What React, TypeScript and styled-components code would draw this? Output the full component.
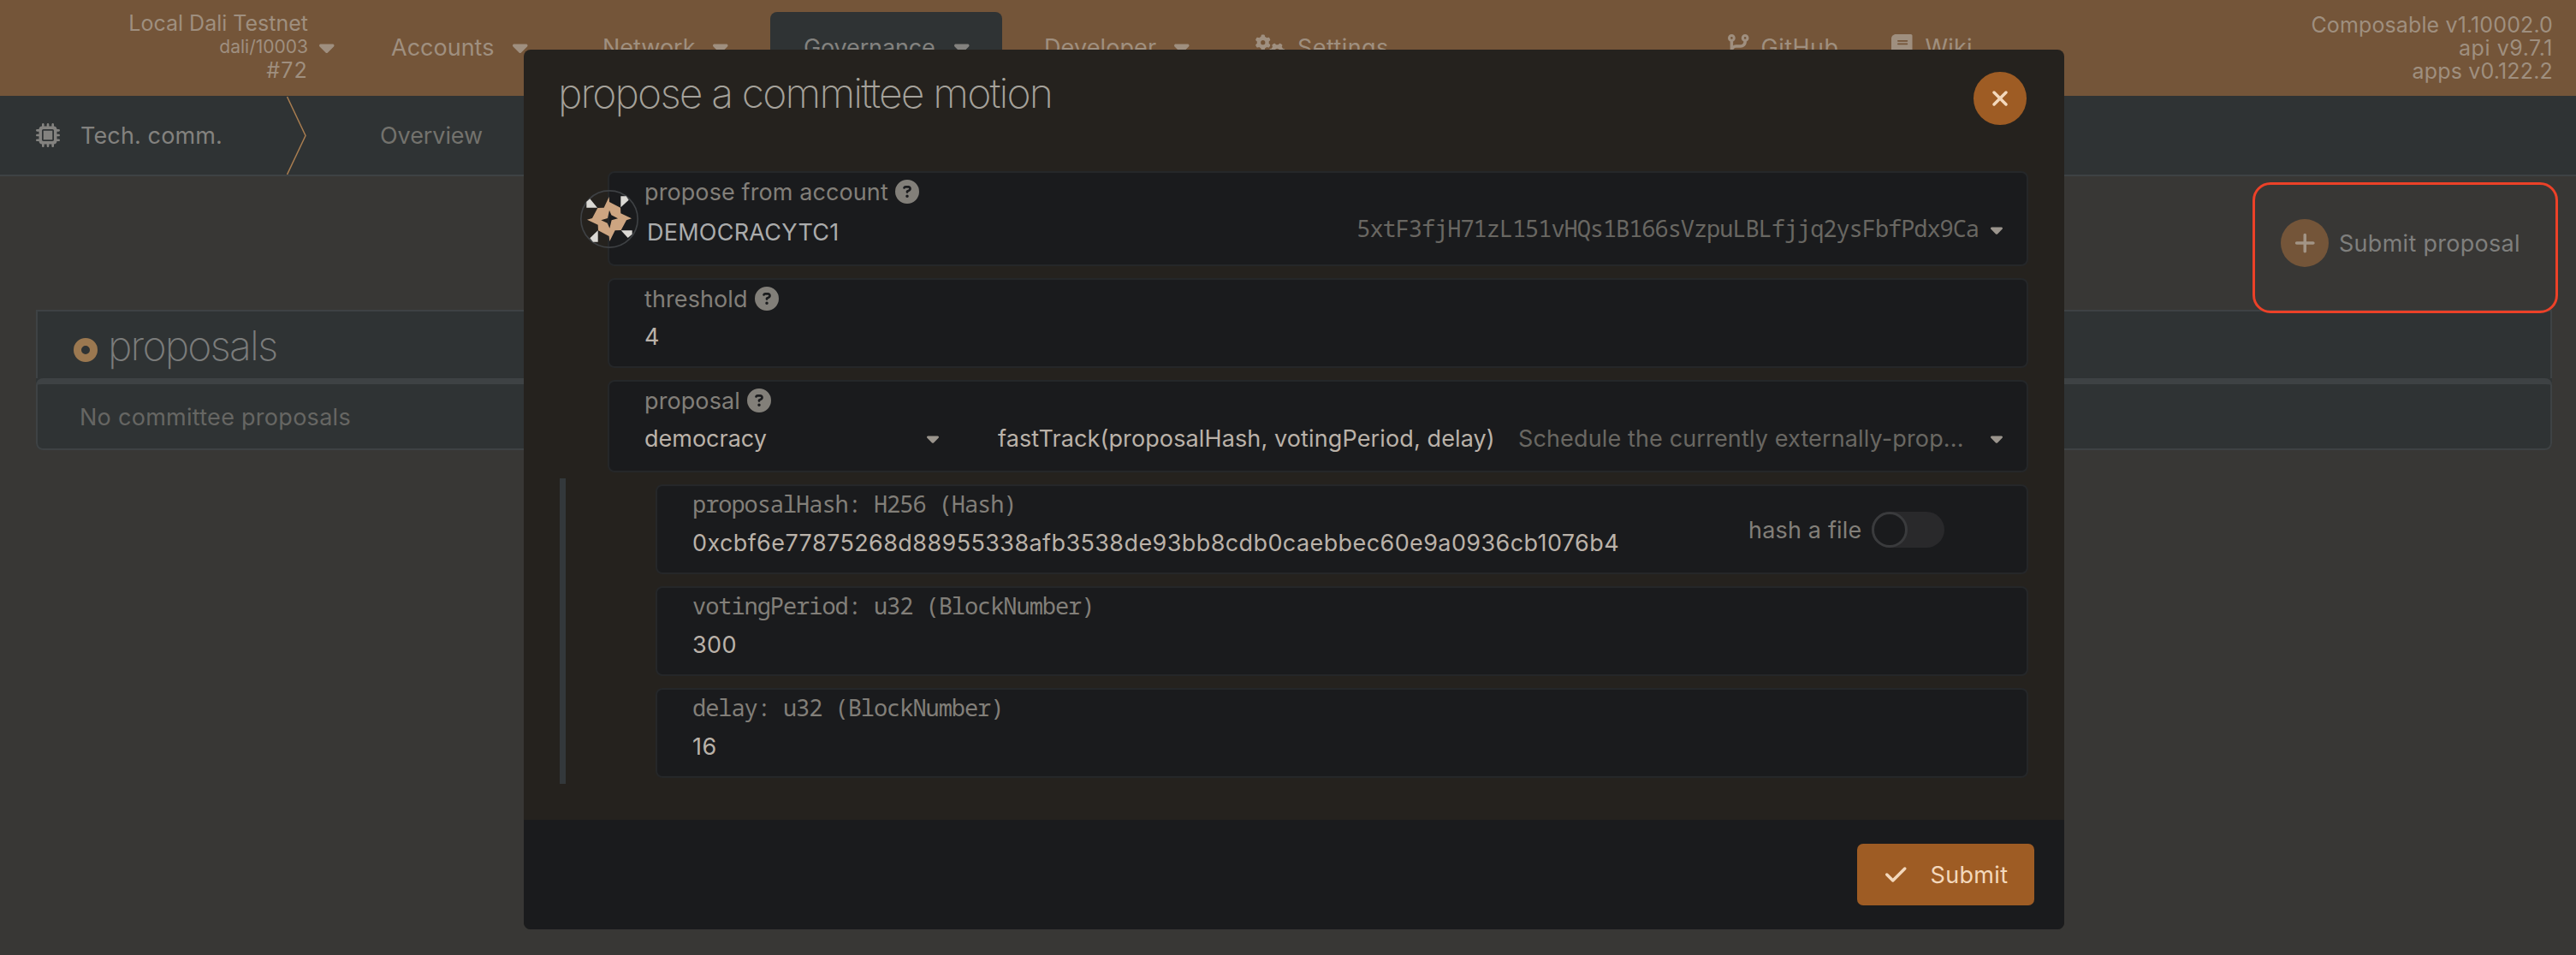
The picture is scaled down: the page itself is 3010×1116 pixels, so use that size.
import React from 'react';
import type { ReactNode } from 'react';
import styled, { createGlobalStyle } from 'styled-components';
import {
  FaBook,
  FaCaretDown,
  FaCheck,
  FaCircleQuestion,
  FaCodeBranch,
  FaGears,
  FaMicrochip,
  FaPlus,
  FaXmark,
} from 'react-icons/fa6';

const sans = `Inter, 'Liberation Sans', sans-serif`;
const mono = `'Noto Sans Mono', 'DejaVu Sans Mono', monospace`;

const color = {
  header: '#745539',
  headerText: '#9f8f7f',
  panel: '#2f3334',
  panelBorder: '#3e4244',
  page: '#383735',
  modal: '#25221e',
  field: '#1a1b1d',
  fieldBorder: '#252729',
  label: '#827f79',
  value: '#bab2a9',
  dim: '#696762',
  accent: '#9e5c24',
  accentText: '#f3d8bc',
};

const GlobalStyle = createGlobalStyle`
  *, *::before, *::after { box-sizing: border-box; }
  body {
    margin: 0;
    background: ${color.page};
    color: ${color.label};
    font-family: ${sans};
    font-size: 27px;
    line-height: 34px;
  }
`;

const Page = styled.div`
  position: relative;
  width: 3010px;
  height: 1116px;
  overflow: hidden;
  background: ${color.page};
`;

const Text = styled.span<{ $ls?: number; $w?: number; $color?: string }>`
  flex: none;
  padding-top: 2px;
  white-space: pre;
  letter-spacing: ${(p) => p.$ls ?? 0}px;
  width: ${(p) => (p.$w ? `${p.$w}px` : 'auto')};
  color: ${(p) => p.$color ?? 'inherit'};
`;

const Icon = styled.span<{ $w?: number; $h?: number }>`
  display: flex;
  flex: none;
  svg {
    display: block;
    width: ${(p) => p.$w ?? 28}px;
    height: ${(p) => p.$h ?? 28}px;
  }
`;

/* ---------- top bar ---------- */

const TopBar = styled.header`
  display: flex;
  height: 112px;
  background: ${color.header};
  color: ${color.headerText};
`;

const ChainSelector = styled.div`
  display: flex;
  align-items: flex-start;
  width: 418px;
  padding-top: 13px;
`;

const BarLine = styled(Text)`
  padding-top: 0;
`;

const ChainInfo = styled.div`
  display: flex;
  flex-direction: column;
  align-items: flex-end;
  width: 360px;
  font-size: 25px;
  line-height: 28px;
`;

const ChainSpec = styled(BarLine)`
  font-size: 21px;
  line-height: 27px;
`;

const ChainCaret = styled(Icon)`
  margin: 28px 0 0 13px;
`;

const NavItem = styled.div<{ $w: number; $active?: boolean; $mr?: number }>`
  display: flex;
  align-items: center;
  width: ${(p) => p.$w}px;
  height: 82px;
  margin: 14px ${(p) => p.$mr ?? 0}px 0 0;
  padding-left: 39px;
  border-radius: 8px 8px 0 0;
  background: ${(p) => (p.$active ? color.panel : 'transparent')};
  color: ${(p) => (p.$active ? '#83827f' : 'inherit')};
`;

const NavIcon = styled(Icon)<{ $mr: number }>`
  margin: -2px ${(p) => p.$mr}px 0 0;
`;

const NavCaret = styled(Icon)`
  margin-top: -1px;
`;

const Versions = styled.div`
  display: flex;
  flex-direction: column;
  align-items: flex-end;
  margin-left: auto;
  padding: 16px 27px 0 0;
  font-size: 25px;
  line-height: 27px;
`;

/* ---------- tabs ---------- */

const Tabs = styled.nav`
  display: flex;
  align-items: center;
  height: 94px;
  padding-left: 42px;
  background: ${color.panel};
  border-bottom: 2px solid ${color.panelBorder};
  color: #83827f;
`;

const TabTitle = styled(Text)`
  margin-left: 24px;
`;

const TabLink = styled(Text)`
  margin-left: 85px;
`;

/* ---------- page content ---------- */

const ActionRow = styled.div`
  position: relative;
  display: flex;
  align-items: center;
  justify-content: flex-end;
  height: 156px;
  padding-right: 65px;
`;

const RoundButton = styled.span<{ $size: number; $bg: string; $fg: string }>`
  display: flex;
  flex: none;
  align-items: center;
  justify-content: center;
  width: ${(p) => p.$size}px;
  height: ${(p) => p.$size}px;
  border-radius: 50%;
  background: ${(p) => p.$bg};
  color: ${(p) => p.$fg};
`;

const ActionLabel = styled(Text)`
  margin-left: 12px;
  color: #7f7f7d;
`;

const Highlight = styled.div`
  position: absolute;
  top: 7px;
  right: 21px;
  width: 357px;
  height: 153px;
  border: 3px solid #ec4128;
  border-radius: 21px;
`;

const Table = styled.section`
  margin: 0 28px 0 42px;
  background: ${color.panel};
  border-radius: 0 0 8px 8px;
`;

const TableHead = styled.div`
  display: flex;
  align-items: center;
  height: 80px;
  padding-left: 42px;
  border: 2px solid ${color.panelBorder};
  border-bottom: 0;
`;

const Donut = styled.span`
  width: 28px;
  height: 28px;
  margin: 12px 12px 0 0;
  border: 9px solid #9b7850;
  border-radius: 50%;
`;

const TableTitle = styled(Text)`
  padding-top: 1px;
  font-size: 48px;
  font-weight: 200;
  line-height: 58px;
  color: #7b7c7b;
`;

const TableBody = styled.div`
  display: flex;
  align-items: center;
  height: 84px;
  padding-left: 49px;
  border: 2px solid ${color.panelBorder};
  border-top-width: 7px;
  border-radius: 8px;
  color: #666663;
`;

/* ---------- modal ---------- */

const Modal = styled.div`
  position: absolute;
  top: 58px;
  left: 612px;
  display: flex;
  flex-direction: column;
  width: 1800px;
  height: 1028px;
  border-radius: 8px;
  overflow: hidden;
  background: ${color.modal};
`;

const ModalHeader = styled.div`
  display: flex;
  align-items: flex-start;
  justify-content: space-between;
  height: 142px;
  padding: 21px 44.5px 0 40px;
`;

const ModalTitle = styled(Text)`
  padding-top: 1px;
  font-size: 48px;
  font-weight: 200;
  line-height: 58px;
  color: #a5a29b;
`;

const CloseWrap = styled.div`
  padding-top: 5px;
`;

const FieldList = styled.div`
  display: flex;
  flex-direction: column;
  gap: 14px;
  padding: 0 42px 0 98px;
`;

const ParamList = styled(FieldList)`
  margin: 7px 0 0 42px;
  padding: 7px 42px 7px 105px;
  border-left: 7px solid #33383b;
`;

const FieldBox = styled.div<{ $h: number }>`
  position: relative;
  display: flex;
  align-items: center;
  height: ${(p) => p.$h}px;
  border: 2px solid ${color.fieldBorder};
  border-radius: 8px;
  background: ${color.field};
`;

const FieldMain = styled.div`
  display: flex;
  flex: 1;
  flex-direction: column;
  align-self: stretch;
  padding: 5px 28px 0 41px;
`;

const LabelRow = styled.div`
  display: flex;
  align-items: center;
  height: 34px;
  color: ${color.label};
`;

const HelpIcon = styled(Icon)`
  margin-left: 8.5px;
`;

const ValueRow = styled.div`
  display: flex;
  align-items: center;
  height: 34px;
  margin-top: 10px;
  color: ${color.value};
`;

const MonoLabel = styled(Text)`
  padding: 0 0 2px;
  font-family: ${mono};
  letter-spacing: -1.06px;
`;

const AccountName = styled(Text)`
  padding: 8px 0 0 3px;
  color: #abacac;
`;

const Address = styled(MonoLabel)`
  margin: 0 14px 0 auto;
  color: ${color.dim};
`;

const MethodName = styled(Text)`
  margin-left: 69px;
`;

const FieldCaret = styled(Icon).attrs({ $w: 14, $h: 22.4 })<{ $end?: boolean }>`
  margin-left: ${(p) => (p.$end ? 'auto' : '0')};
  color: #9b958d;
`;

const Identicon = styled.svg`
  position: absolute;
  top: 20px;
  left: -34px;
  width: 68px;
  height: 68px;
`;

const FileToggle = styled.div`
  display: flex;
  align-items: center;
  padding-right: 96px;
`;

const ToggleTrack = styled.span`
  display: flex;
  width: 85px;
  height: 42px;
  border-radius: 21px;
  background: #29292b;
`;

const ToggleKnob = styled.span`
  width: 42px;
  height: 42px;
  border: 3px solid #3a3b3d;
  border-radius: 50%;
  background: ${color.field};
`;

const ModalFooter = styled.div`
  display: flex;
  align-items: center;
  justify-content: flex-end;
  height: 128px;
  margin-top: auto;
  padding-right: 35px;
  background: ${color.field};
`;

const SubmitButton = styled.div`
  display: flex;
  align-items: center;
  width: 207px;
  height: 72px;
  padding-left: 33px;
  gap: 28px;
  border-radius: 7px;
  background: ${color.accent};
  color: ${color.accentText};
`;

const Caret = () => (
  <NavCaret $w={17.5}>
    <FaCaretDown />
  </NavCaret>
);

type FieldProps = {
  height: number;
  label: ReactNode;
  help?: boolean;
  before?: ReactNode;
  aside?: ReactNode;
  children: ReactNode;
};

const Field = ({ height, label, help, before, aside, children }: FieldProps) => (
  <FieldBox $h={height}>
    {before}
    <FieldMain>
      <LabelRow>
        {label}
        {help && (
          <HelpIcon>
            <FaCircleQuestion />
          </HelpIcon>
        )}
      </LabelRow>
      <ValueRow>{children}</ValueRow>
    </FieldMain>
    {aside}
  </FieldBox>
);

const AccountIdenticon = () => (
  <Identicon viewBox="54 66 204 204">
    <circle cx="156" cy="168" r="99.5" fill="none" stroke="#3e4144" strokeWidth="5" />
    <path
      fill="#cda581"
      fillRule="evenodd"
      d="M155 90 156 108 195 128 196 148 234 166 216 172 197 207 176 208 157 246 155 228 117 208 116 188 78 170 96 165 115 129 137 128ZM156 137 163 154 186 166 164 172 157 200 149 182 127 172 150 165Z"
    />
    <g fill="#dbd9d4">
      <path d="M76 128V107L88 97 114 128Z" />
      <path d="M196 127V88H215L224 101Z" />
      <path d="M197 208H236V221L221 234Z" />
      <path d="M116 208V248H99L88 235Z" />
    </g>
  </Identicon>
);

export default function App() {
  return (
    <Page>
      <GlobalStyle />

      <TopBar>
        <ChainSelector>
          <ChainInfo>
            <BarLine>Local Dali Testnet</BarLine>
            <ChainSpec>dali/10003</ChainSpec>
            <BarLine $ls={1.2}>#72</BarLine>
          </ChainInfo>
          <ChainCaret $w={17.5}>
            <FaCaretDown />
          </ChainCaret>
        </ChainSelector>
        <NavItem $w={247}>
          <Text $w={142}>Accounts</Text>
          <Caret />
        </NavItem>
        <NavItem $w={235}>
          <Text $w={129}>Network</Text>
          <Caret />
        </NavItem>
        <NavItem $w={271} $active $mr={10}>
          <Text $w={176} $ls={-0.14}>Governance</Text>
          <Caret />
        </NavItem>
        <NavItem $w={247}>
          <Text $w={152} $ls={0.11}>Developer</Text>
          <Caret />
        </NavItem>
        <NavItem $w={552}>
          <NavIcon $w={35} $mr={14}>
            <FaGears />
          </NavIcon>
          <Text $ls={0.41}>Settings</Text>
        </NavItem>
        <NavItem $w={191}>
          <NavIcon $w={24.5} $mr={14}>
            <FaCodeBranch />
          </NavIcon>
          <Text $ls={0.49}>GitHub</Text>
        </NavItem>
        <NavItem $w={180}>
          <NavIcon $w={24.5} $mr={15}>
            <FaBook />
          </NavIcon>
          <Text $ls={0.18}>Wiki</Text>
        </NavItem>
        <Versions>
          <BarLine $ls={0.12}>Composable v1.10002.0</BarLine>
          <BarLine $ls={0.56}>api v9.7.1</BarLine>
          <BarLine $ls={0.18}>apps v0.122.2</BarLine>
        </Versions>
      </TopBar>

      <Tabs>
        <Icon>
          <FaMicrochip />
        </Icon>
        <TabTitle $w={241} $ls={0.13}>Tech. comm.</TabTitle>
        <svg width="24" height="92" viewBox="0 0 24 92" fill="none" stroke="#a87d50" strokeWidth="1.5">
          <path d="M0.5 1 22 46.5 0.5 92" />
        </svg>
        <TabLink $color="#73726d" $ls={-0.08}>Overview</TabLink>
      </Tabs>

      <ActionRow>
        <RoundButton $size={56} $bg={color.header} $fg="#a29485">
          <Icon $w={24.5}>
            <FaPlus />
          </Icon>
        </RoundButton>
        <ActionLabel $w={212} $ls={0.28}>Submit proposal</ActionLabel>
        <Highlight />
      </ActionRow>

      <Table>
        <TableHead>
          <Donut />
          <TableTitle $ls={-1.81}>proposals</TableTitle>
        </TableHead>
        <TableBody>
          <Text $ls={0.28}>No committee proposals</Text>
        </TableBody>
      </Table>

      <Modal>
        <ModalHeader>
          <ModalTitle $ls={-1.85}>propose a committee motion</ModalTitle>
          <CloseWrap>
            <RoundButton $size={61.5} $bg={color.accent} $fg={color.accentText}>
              <Icon>
                <FaXmark />
              </Icon>
            </RoundButton>
          </CloseWrap>
        </ModalHeader>

        <FieldList>
          <Field height={111} label={<Text $ls={0.1}>propose from account</Text>} help before={<AccountIdenticon />}>
            <AccountName $ls={0.25}>DEMOCRACYTC1</AccountName>
            <Address>5xtF3fjH71zL151vHQs1B166sVzpuLBLfjjq2ysFbfPdx9Ca</Address>
            <FieldCaret>
              <FaCaretDown />
            </FieldCaret>
          </Field>
          <Field height={105} label={<Text $ls={0.1}>threshold</Text>} help>
            <Text>4</Text>
          </Field>
          <Field height={108} label={<Text $ls={0.1}>proposal</Text>} help>
            <Text $w={330}>democracy</Text>
            <FieldCaret>
              <FaCaretDown />
            </FieldCaret>
            <MethodName $w={608} $ls={0.12}>fastTrack(proposalHash, votingPeriod, delay)</MethodName>
            <Text $color={color.dim} $ls={0.135}>Schedule the currently externally-prop...</Text>
            <FieldCaret $end>
              <FaCaretDown />
            </FieldCaret>
          </Field>
        </FieldList>

        <ParamList>
          <Field
            height={105}
            label={<MonoLabel>proposalHash: H256 (Hash)</MonoLabel>}
            aside={
              <FileToggle>
                <Text $w={144} $ls={0.17}>hash a file</Text>
                <ToggleTrack>
                  <ToggleKnob />
                </ToggleTrack>
              </FileToggle>
            }
          >
            <Text $ls={0.4}>0xcbf6e77875268d88955338afb3538de93bb8cdb0caebbec60e9a0936cb1076b4</Text>
          </Field>
          <Field height={105} label={<MonoLabel>votingPeriod: u32 (BlockNumber)</MonoLabel>}>
            <Text $ls={0.4}>300</Text>
          </Field>
          <Field height={105} label={<MonoLabel>delay: u32 (BlockNumber)</MonoLabel>}>
            <Text $ls={0.4}>16</Text>
          </Field>
        </ParamList>

        <ModalFooter>
          <SubmitButton>
            <Icon $w={24.5}>
              <FaCheck />
            </Icon>
            <Text $ls={0.34}>Submit</Text>
          </SubmitButton>
        </ModalFooter>
      </Modal>
    </Page>
  );
}
